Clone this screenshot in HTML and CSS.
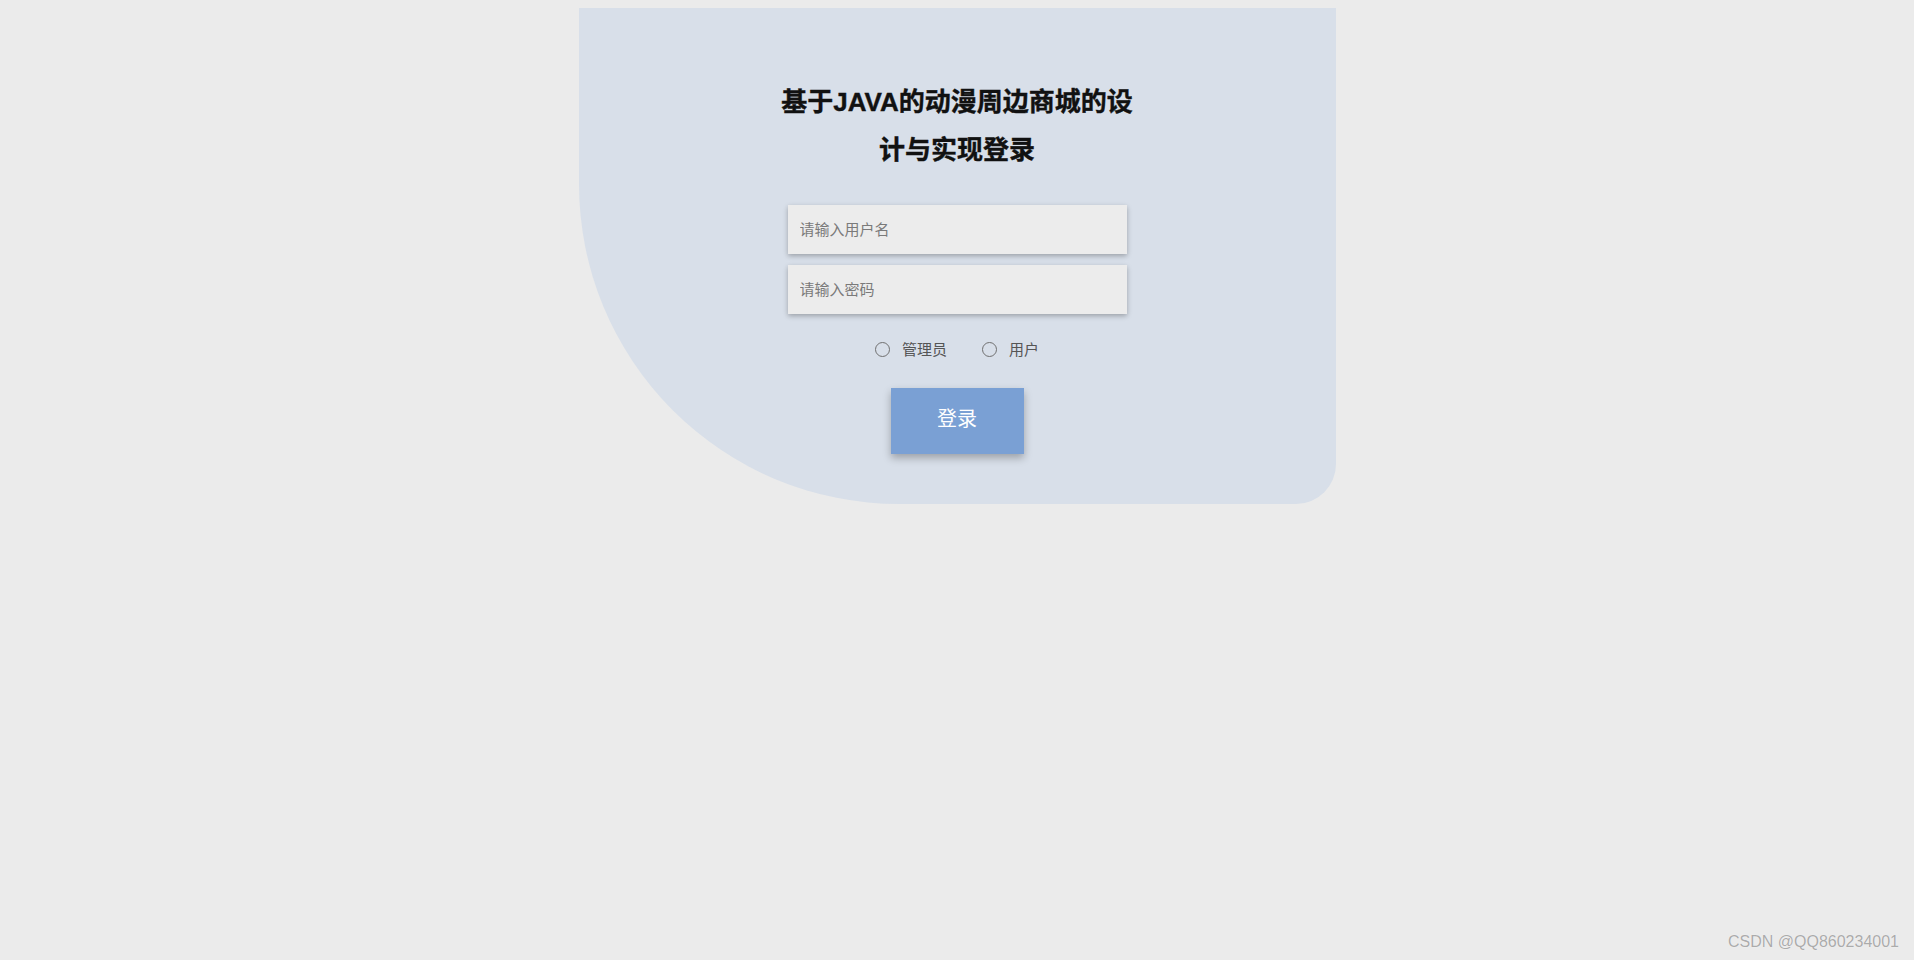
FILE: index.html
```html
<!DOCTYPE html>
<html lang="zh-CN">
<head>
<meta charset="utf-8">
<title>登录</title>
<link rel="stylesheet" href="styles.css">
</head>
<body>
<div class="page">
  <div class="panel">
    <h1 class="title">基于JAVA的动漫周边商城的设计与实现登录</h1>
    <form class="form">
      <input class="field" type="text" placeholder="请输入用户名">
      <input class="field" type="password" placeholder="请输入密码">
      <div class="roles">
        <label class="role"><input class="radio" type="radio" name="role"><span>管理员</span></label>
        <label class="role"><input class="radio" type="radio" name="role"><span>用户</span></label>
      </div>
      <button class="login" type="button">登录</button>
    </form>
  </div>
</div>
<div class="watermark">CSDN @QQ860234001</div>
</body>
</html>
```

FILE: styles.css
```css
html, body {
  margin: 0;
  padding: 0;
  height: 100%;
}
body {
  background: #ebebeb;
  font-family: "Liberation Sans", "Noto Sans CJK SC", sans-serif;
  overflow: hidden;
}
.page {
  display: flex;
  justify-content: center;
  padding-top: 8px;
}
.panel {
  box-sizing: border-box;
  width: 757px;
  height: 496px;
  background: #d8dfe9;
  border-radius: 0 0 40px 320px;
  padding-top: 70px;
  display: flex;
  flex-direction: column;
  align-items: center;
}
.title {
  width: 372px;
  margin: 0;
  font-size: 26px;
  line-height: 48px;
  font-weight: bold;
  color: #111;
  text-align: center;
  -webkit-text-stroke: 0.4px #111;
}
.form {
  margin-top: 31px;
  display: flex;
  flex-direction: column;
  align-items: center;
}
.field {
  box-sizing: border-box;
  width: 339px;
  height: 49px;
  margin: 0 0 11px 0;
  padding: 0 12px;
  border: none;
  outline: none;
  background: #ececec;
  box-shadow: 0 2px 5px rgba(0, 0, 0, 0.28);
  font-family: "Liberation Sans", "Noto Sans CJK SC", sans-serif;
  font-size: 15px;
  color: #333;
}
.field::placeholder {
  color: #7a7a7a;
}
.roles {
  margin-top: 13px;
  height: 20px;
  display: flex;
  align-items: center;
  gap: 35px;
  font-size: 15px;
  color: #555;
}
.role {
  display: flex;
  align-items: center;
  gap: 12px;
}
.radio {
  appearance: none;
  -webkit-appearance: none;
  margin: 2px 0 0 0;
  width: 15px;
  height: 15px;
  border: 1px solid #707070;
  border-radius: 50%;
  background: transparent;
  box-sizing: border-box;
}
.login {
  margin-top: 30px;
  width: 133px;
  height: 66px;
  padding: 0 0 7px 0;
  border: none;
  background: #7aa0d4;
  color: #fff;
  font-family: "Liberation Sans", "Noto Sans CJK SC", sans-serif;
  font-size: 20px;
  box-shadow: 0 4px 8px rgba(0, 0, 0, 0.28);
  cursor: pointer;
}
.watermark {
  position: absolute;
  right: 15px;
  bottom: 9px;
  font-family: "Liberation Sans", sans-serif;
  font-size: 16px;
  color: #ababab;
  text-shadow: 0 0 1px #fff;
}
```
